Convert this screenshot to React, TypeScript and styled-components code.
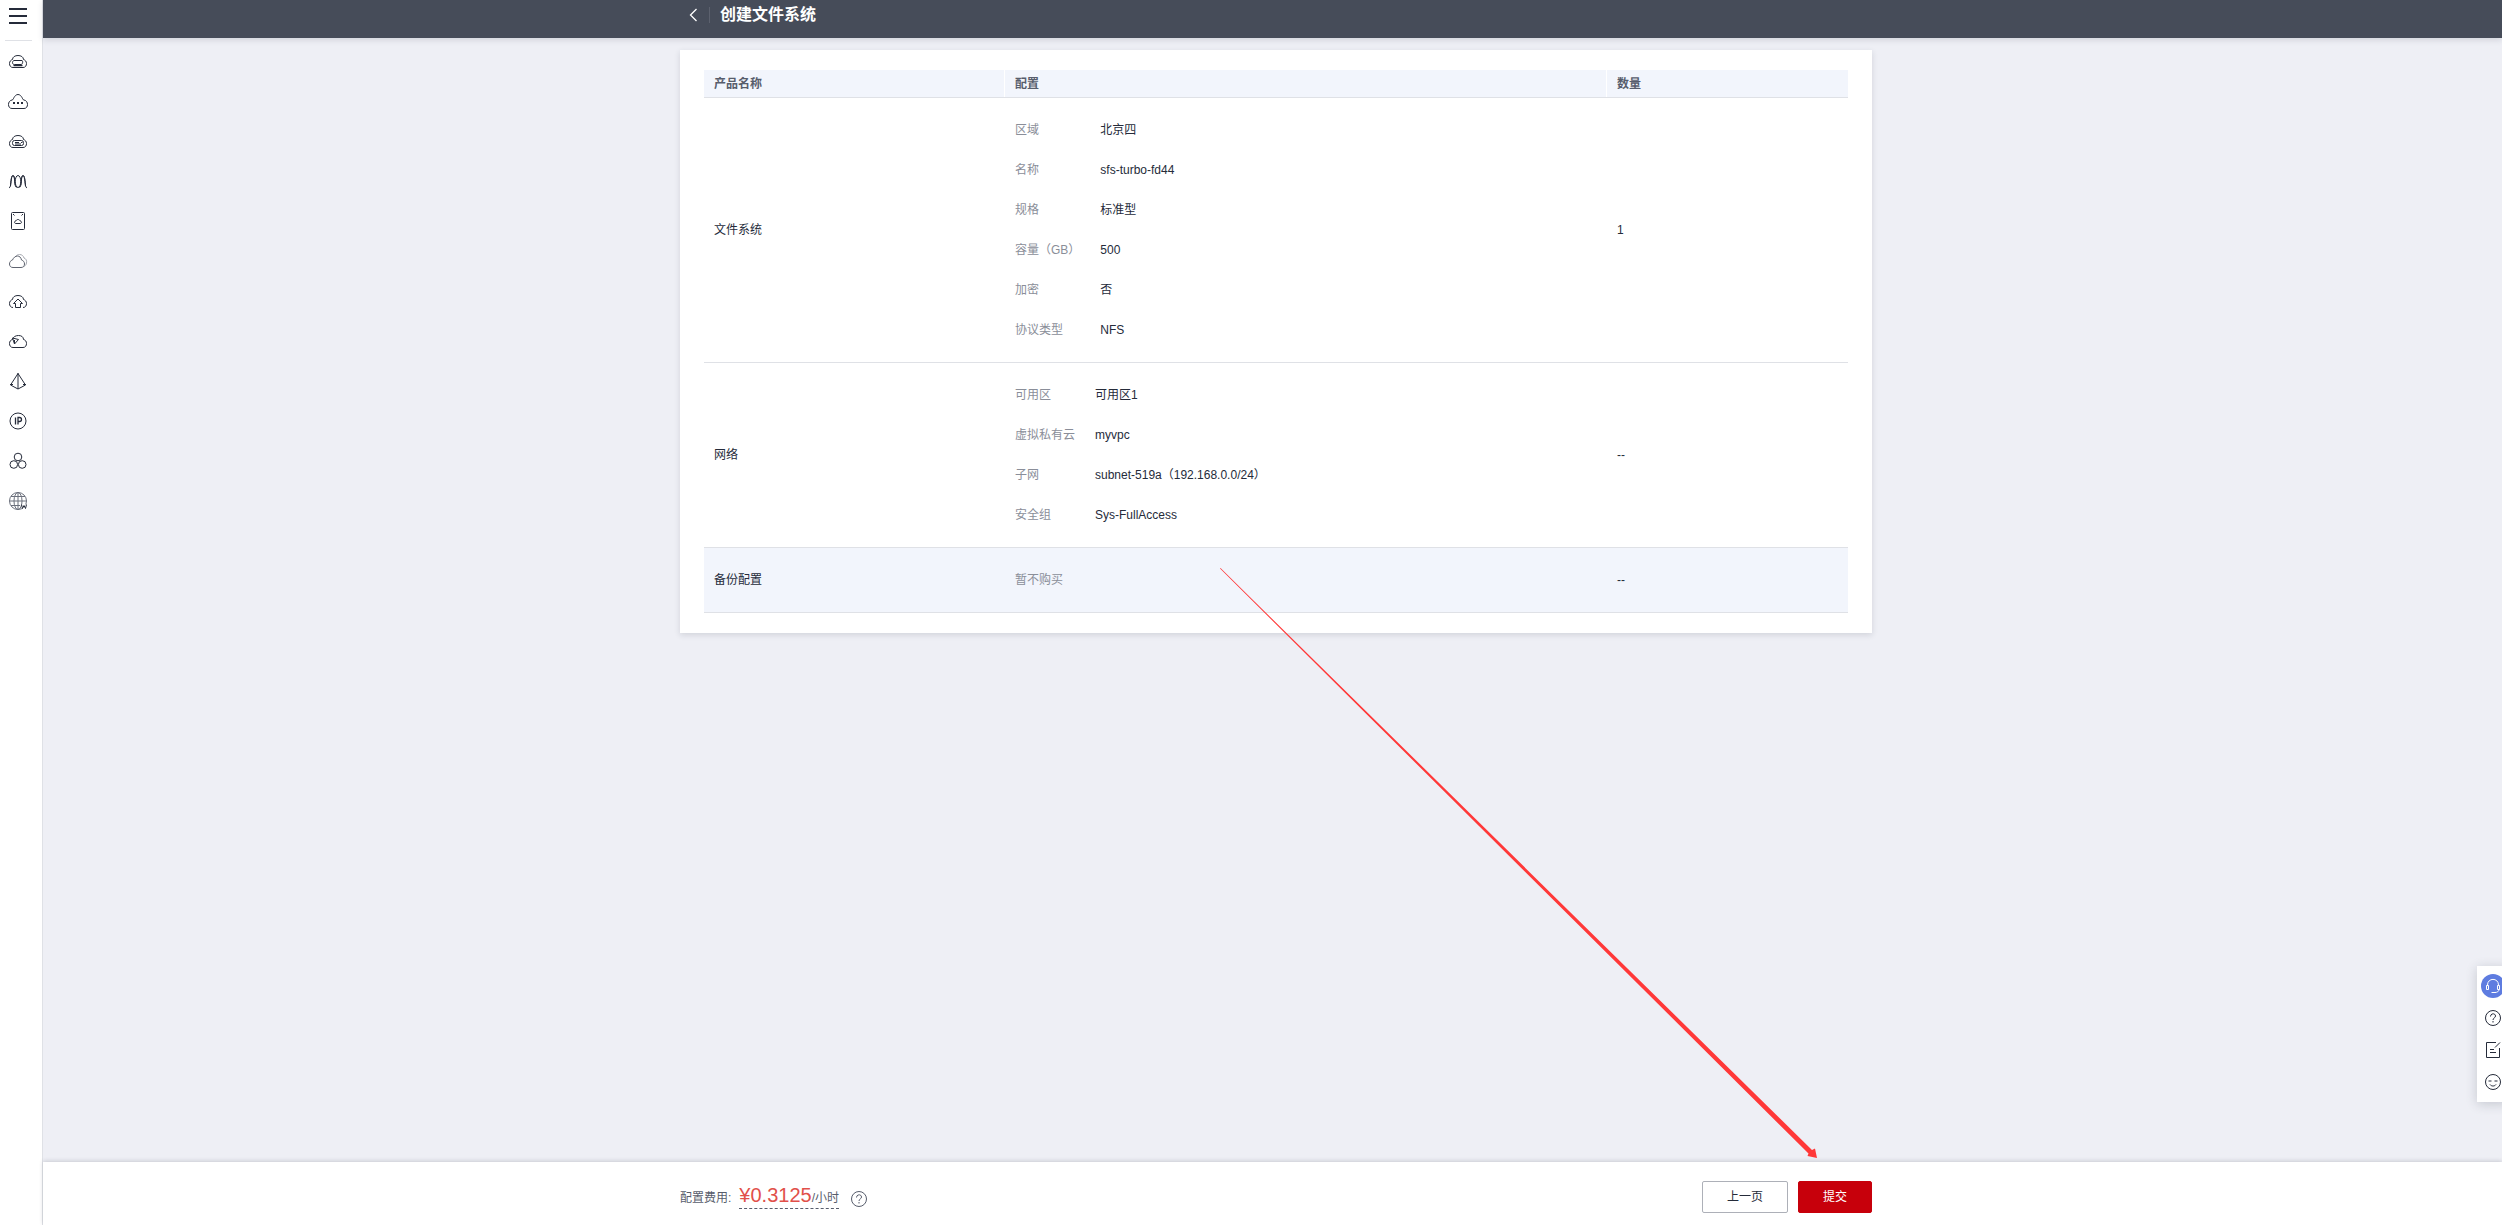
import React from "react";
import styled, { createGlobalStyle } from "styled-components";

const INK = "#252b3a";
const MUTED = "#8a8e99";
const LINE = "#dfe1e6";

const GlobalStyle = createGlobalStyle`
  *, *::before, *::after { box-sizing: border-box; }
  body {
    margin: 0;
    background: #eeeff5;
    color: ${INK};
    font: 12px/18px "Liberation Sans", "Noto Sans CJK SC", sans-serif;
    overflow: hidden;
  }
  button { font: inherit; color: inherit; cursor: pointer; }
  a { color: inherit; text-decoration: none; }
`;

const Shell = styled.div`
  display: flex;
  min-height: 100vh;
`;

const Rail = styled.nav`
  flex: 0 0 43px;
  display: flex;
  flex-direction: column;
  background: #fff;
  border-right: 1px solid ${LINE};
`;

const RailTop = styled.div`
  height: 41px;
  margin: 0 10px 0 5px;
  padding: 7px 4px;
  border-bottom: 1px solid ${LINE};
`;

const MenuButton = styled.button`
  display: block;
  width: 18px;
  height: 18px;
  padding: 0;
  border: 0;
  background: none;
`;

const RailLink = styled.a`
  display: flex;
  align-items: center;
  justify-content: center;
  width: 36px;
  height: 40px;
`;

const Column = styled.div`
  flex: 1;
  min-width: 0;
  display: flex;
  flex-direction: column;
`;

const Header = styled.header`
  height: 38px;
  padding: 0 0 8px 7px;
  background: #464c59;
  color: #fff;
  box-shadow: 0 2px 6px rgba(37, 43, 58, 0.14);
`;

const Centered = styled.div`
  display: flex;
  align-items: center;
  width: 100%;
  max-width: 1192px;
  height: 100%;
  margin: 0 auto;
`;

const BackLink = styled.button`
  display: flex;
  align-items: center;
  width: 30px;
  height: 16px;
  margin-right: 10px;
  padding: 0 0 0 9px;
  border: 0;
  border-right: 1px solid #5c616e;
  background: none;
`;

const Title = styled.h1`
  margin: 0;
  font-size: 16px;
  line-height: 24px;
  font-weight: 700;
`;

const Main = styled.main`
  flex: 1;
  padding: 12px 0 12px 7px;
`;

const Card = styled.section`
  max-width: 1192px;
  margin: 0 auto;
  padding: 20px 24px;
  background: #fff;
  box-shadow: 0 2px 6px rgba(37, 43, 58, 0.14);
`;

const Table = styled.table`
  width: 100%;
  table-layout: fixed;
  border-collapse: separate;
  border-spacing: 0;
`;

const HeadCell = styled.th<{ $width?: number }>`
  ${(p) => (p.$width ? `width: ${p.$width}px;` : "")}
  height: 28px;
  padding: 0 10px;
  background: #f2f5fc;
  border-bottom: 1px solid ${LINE};
  color: #575d6c;
  text-align: left;
  font-weight: 700;
  box-shadow: inset -1px 0 #fff;
  &:last-child { box-shadow: none; }
`;

const Row = styled.tr<{ $active?: boolean }>`
  background: ${(p) => (p.$active ? "#f2f5fc" : "#fff")};
`;

const Cell = styled.td`
  padding: 12px 10px;
  border-bottom: 1px solid ${LINE};
`;

const Specs = styled.dl`
  display: grid;
  grid-template-columns: auto 1fr;
  grid-auto-rows: 40px;
  align-items: center;
  column-gap: 20px;
  margin: 0;
`;

const SpecName = styled.dt`
  color: ${MUTED};
`;

const SpecValue = styled.dd`
  margin: 0;
`;

const Empty = styled.p`
  margin: 0;
  color: ${MUTED};
  line-height: 40px;
`;

const Footer = styled.footer`
  height: 63px;
  padding: 7px 0 0 7px;
  background: #fff;
  box-shadow: 0 -1px 4px rgba(37, 43, 58, 0.18);
`;

const Fee = styled.div`
  display: flex;
  align-items: baseline;
  flex: 1;
  gap: 8px;
  color: #575d6c;
`;

const Price = styled.span`
  border-bottom: 1px dashed #575d6c;
  line-height: 20px;
`;

const Amount = styled.span`
  font-size: 20px;
  color: #e1504a;
`;

const HelpButton = styled.button`
  display: flex;
  align-self: center;
  margin-left: 3px;
  padding: 3px 0 0;
  border: 0;
  background: none;
`;

const Actions = styled.div`
  display: flex;
  gap: 10px;
`;

const ActionButton = styled.button<{ $primary?: boolean }>`
  height: 32px;
  padding: 0 24px;
  border: 1px solid ${(p) => (p.$primary ? "#c7000b" : "#adb0b8")};
  border-radius: 2px;
  background: ${(p) => (p.$primary ? "#c7000b" : "#fff")};
  color: ${(p) => (p.$primary ? "#fff" : INK)};
`;

const Dock = styled.aside`
  position: fixed;
  right: -7px;
  bottom: 123px;
  display: flex;
  flex-direction: column;
  align-items: center;
  gap: 8px;
  width: 32px;
  height: 136px;
  padding-top: 8px;
  background: #fff;
  box-shadow: 0 2px 12px rgba(37, 43, 58, 0.2);
`;

const DockButton = styled.button<{ $accent?: boolean }>`
  display: flex;
  align-items: center;
  justify-content: center;
  width: 24px;
  height: 24px;
  padding: 0;
  border: 0;
  border-radius: 12px;
  color: ${(p) => (p.$accent ? "#fff" : INK)};
  background: ${(p) => (p.$accent ? "#5e7ce0" : "none")};
`;

const Annotation = styled.svg`
  position: absolute;
  left: 1220px;
  top: 568px;
  pointer-events: none;
`;

const CLOUD = "M5 16.5C2.500 16.500 1.500 14.500 1.500 12.500S2.800 9 4.500 8.500C4.500 6 7 4.500 10 4.500s5.500 1.500 5.500 4c1.700.5 3 2 3 4s-1 4-3.500 4z";

const railIcons: { name: string; art: React.ReactNode }[] = [
  { name: "弹性云服务器", art: <><path d={CLOUD} /><path d="M6 9.500h8c1 0 1 4-1 4H6.500c-2 0-2-1.500-2-2S5 9.500 6 9.500z" /><path d="M5.500 14.500h9" strokeWidth="1.500" /></> },
  { name: "云耀服务器", art: <><path d="M4 17.500C1.500 17.500.5 15.500.5 13.500S1.500 9.500 4 9c1.500-.3 1.300-1.500 2-2.500C7 5 8 3.500 10 3.500S13 5 14 6.500c.7 1 .5 2.200 2 2.500 2.500.5 3.500 2.500 3.500 4.500s-1 4-3.500 4z" /><path d="M5 12h2M9 12h2M13 12h2" strokeWidth="2" /></> },
  { name: "裸金属服务器", art: <><path d={CLOUD} /><rect x="4.500" y="9.500" width="11" height="5" rx="2" /><path d="M7 11.500h4M7 13h6M13 11.500h1.500" /></> },
  { name: "弹性伸缩", art: <><ellipse cx="10" cy="10.500" rx="2.800" ry="6" /><path d="M1 17C4 16 2.500 4.500 5 4.500S6 16 8.500 16.500M19 17c-3-1-1.500-12.500-4-12.500S14 16 11.500 16.500" /><path d="M2.500 15c0-5 1-10.500 2.500-10.500 2 0 1.500 9 2.500 10M17.500 15c0-5-1-10.500-2.500-10.500-2 0-1.500 9-2.500 10" /></> },
  { name: "云硬盘", art: <><rect x="3.500" y="1.500" width="13" height="17" rx="1" /><path d="M5 3l1.500 1.500M15 3l-1.500 1.500M8 12.500c-2 0-2-2.500 0-2.500.3-2 3.700-2 4 0 2 0 2 2.500 0 2.500z" /></> },
  { name: "云备份", art: <><path stroke="#a7aab2" d="M7.500 6C8.500 4 10 3.500 11.500 3.500c2.500 0 4 1.500 4.500 3.500 2 .7 3 2.500 2.500 5-.3 2-1.500 3-3 3.800" /><path stroke="#5f6470" d="M5 16.500c-2.500 0-3.500-1.700-3.500-3.500S2.500 9.500 4.500 9C5.500 6.500 7.500 5 9.500 5s3.500 1.500 4 4c2 .7 3 2 3 4s-1.300 3.500-3.500 3.500z" /></> },
  { name: "对象存储服务", art: <><path d="M5 16.500C2.500 16.500 1.500 14.500 1.500 12.500S2.800 9 4.500 8.500C4.500 6 7 4.500 10 4.500s5.500 1.500 5.500 4c1.700.5 3 2 3 4s-1 4-3.500 4" /><path d="M7.500 16.500v-4H5.500L10 8l4.500 4.500h-2v4z" /></> },
  { name: "弹性文件服务", art: <><path d="M5 16.500C2.500 16.500 1.500 14.500 1.500 12.500S2.500 9 4.500 8.500C5 6 7.500 4.500 10.500 4.500S15.500 6 15.500 8.500c2 .5 3 2 3 4s-1 4-3.500 4z" /><path d="M4.500 7l6 1.500L6.500 13zM6.500 9v3.500" /></> },
  { name: "虚拟私有云", art: <path d="M10 2.500L2.500 14l7.500 4 7.500-4zM10 2v16M2 13.500h3M15 13.500h3" /> },
  { name: "弹性公网IP", art: <><circle cx="10" cy="10" r="8" /><path d="M7.500 6.500v7M10 13.500v-7h1.500a2 2 0 0 1 0 4H10" strokeWidth="1.300" /></> },
  { name: "内容分发网络", art: <><circle cx="10" cy="6" r="3.800" /><circle cx="5.800" cy="13.500" r="3.800" /><circle cx="14.200" cy="13.500" r="3.800" /></> },
  { name: "域名注册", art: <g stroke="#6b707c"><circle cx="10" cy="10" r="8.500" /><ellipse cx="10" cy="10" rx="4" ry="8.500" /><path d="M1.500 10h17M3 5.500h14M3 14.500h9M10 1.500v17" /><path stroke="#fff" strokeWidth="4" d="M14 15.500h5" /><path stroke={INK} d="M13.500 13.500l1 4 1.500-3 1.500 3 1-4" /></g> },
];

const Glyph = ({ size = 18, children }: { size?: number; children: React.ReactNode }) => (
  <svg width={size} height={size} viewBox={`0 0 ${size} ${size}`} fill="none" stroke="currentColor" strokeWidth="1" aria-hidden="true">
    {children}
  </svg>
);

const QuestionArt = () => (
  <>
    <circle cx="9" cy="9" r="7.500" />
    <path d="M6.500 7.500c0-3.500 5-3.500 5-.5 0 2-2.500 1.800-2.500 4M9 12v1.500" />
  </>
);

const products = [
  {
    name: "文件系统",
    count: "1",
    specs: [["区域", "北京四"], ["名称", "sfs-turbo-fd44"], ["规格", "标准型"], ["容量（GB）", "500"], ["加密", "否"], ["协议类型", "NFS"]],
  },
  {
    name: "网络",
    count: "--",
    specs: [["可用区", "可用区1"], ["虚拟私有云", "myvpc"], ["子网", "subnet-519a（192.168.0.0/24）"], ["安全组", "Sys-FullAccess"]],
  },
  { name: "备份配置", count: "--", specs: [] },
];

export default function App() {
  return (
    <>
      <GlobalStyle />
      <Shell>
        <Rail>
          <RailTop>
            <MenuButton aria-label="服务列表">
              <Glyph><path d="M0 2h18M0 9h18M0 16h18" strokeWidth="2" /></Glyph>
            </MenuButton>
          </RailTop>
          {railIcons.map((icon) => (
            <RailLink key={icon.name} href="#" aria-label={icon.name}>
              <Glyph size={20}>{icon.art}</Glyph>
            </RailLink>
          ))}
        </Rail>
        <Column>
          <Header>
            <Centered>
              <BackLink aria-label="返回">
                <svg width="9" height="14" viewBox="0 0 9 14" fill="none" stroke="#fff" strokeWidth="1.300">
                  <path d="M7.500 1L1.500 7l6 6" />
                </svg>
              </BackLink>
              <Title>创建文件系统</Title>
            </Centered>
          </Header>
          <Main>
            <Card>
              <Table>
                <thead>
                  <tr>
                    <HeadCell $width={301}>产品名称</HeadCell>
                    <HeadCell $width={602}>配置</HeadCell>
                    <HeadCell>数量</HeadCell>
                  </tr>
                </thead>
                <tbody>
                  {products.map((product) => (
                    <Row key={product.name} $active={product.specs.length === 0}>
                      <Cell>{product.name}</Cell>
                      <Cell>
                        {product.specs.length === 0 ? (
                          <Empty>暂不购买</Empty>
                        ) : (
                          <Specs>
                            {product.specs.map(([name, value]) => (
                              <React.Fragment key={name}>
                                <SpecName>{name}</SpecName>
                                <SpecValue>{value}</SpecValue>
                              </React.Fragment>
                            ))}
                          </Specs>
                        )}
                      </Cell>
                      <Cell>{product.count}</Cell>
                    </Row>
                  ))}
                </tbody>
              </Table>
            </Card>
          </Main>
          <Footer>
            <Centered>
              <Fee>
                <span>配置费用:</span>
                <Price><Amount>¥0.3125</Amount>/小时</Price>
                <HelpButton aria-label="计费说明"><Glyph><QuestionArt /></Glyph></HelpButton>
              </Fee>
              <Actions>
                <ActionButton type="button">上一页</ActionButton>
                <ActionButton type="button" $primary>提交</ActionButton>
              </Actions>
            </Centered>
          </Footer>
        </Column>
      </Shell>
      <Dock>
        <DockButton $accent aria-label="在线客服">
          <Glyph>
            <path d="M3.500 8C3.500.5 14.500.5 14.500 8M2.500 8.500h2v4h-2zM13.500 8.500h2v4h-2zM15 12.500c0 2-2 3-4 3M7.500 15.500h4" />
          </Glyph>
        </DockButton>
        <DockButton aria-label="帮助"><Glyph><QuestionArt /></Glyph></DockButton>
        <DockButton aria-label="建议反馈">
          <Glyph><path d="M12 1.500H2.500v15h13V7M16 1.500L11 6.500M6 8.500h4M6 11.500h6" /></Glyph>
        </DockButton>
        <DockButton aria-label="满意度评价">
          <Glyph><circle cx="9" cy="9" r="7.500" /><path d="M4.500 8h3M10.500 8h3M6 11.500c1.500 2 4.500 2 6 0" /></Glyph>
        </DockButton>
      </Dock>
      <Annotation width="600" height="592" viewBox="0 0 600 592" aria-hidden="true">
        <path fill="#ff3838" d="M0 0.500L0.500 0L592 582L595 580.500L597 590L587.500 588L588.500 585.500z" />
      </Annotation>
    </>
  );
}
